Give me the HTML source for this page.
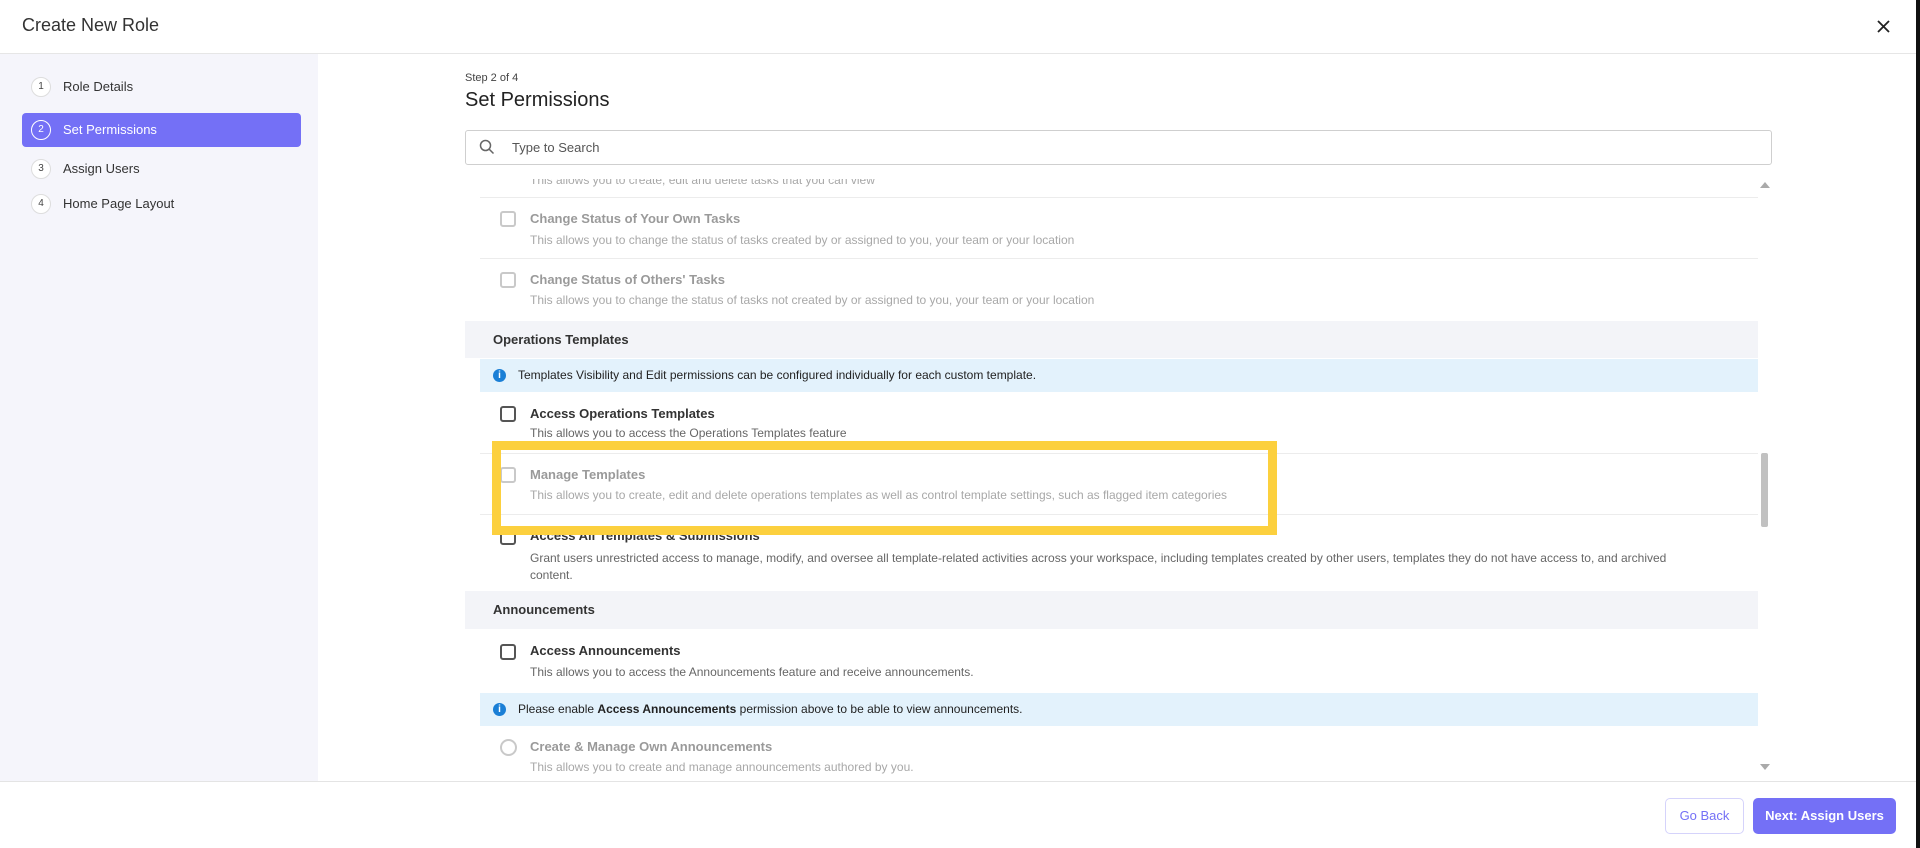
<!DOCTYPE html>
<html><head><meta charset="utf-8"><style>
*{margin:0;padding:0;box-sizing:border-box}
body{width:1920px;height:848px;position:relative;overflow:hidden;background:#fff;font-family:"Liberation Sans",sans-serif;color:#222}
.a{position:absolute;white-space:nowrap}
.t{font-size:13px;font-weight:bold}
.d{font-size:12px}
.dis .t{color:#9a9a9a}.dis .d{color:#a8a8a8}
.en .t{color:#333}.en .d{color:#666}
.cb{position:absolute;width:16px;height:16px;border:2px solid #c9c9c9;border-radius:3px;background:#fff}
.en .cb{border-color:#555}
.sep{position:absolute;left:480px;width:1278px;height:1px;background:#ececec}
.sec{position:absolute;left:465px;width:1293px;background:#f3f4f8;font-size:13px;font-weight:bold;color:#333;padding-left:28px}
.info{position:absolute;left:480px;width:1278px;background:#e3f2fc;font-size:12px;color:#222;padding-left:38px}
.info i{position:absolute;left:13px;width:13px;height:13px;border-radius:50%;background:#1a7fd6;color:#fff;font-size:10px;font-style:normal;text-align:center;line-height:13px;font-weight:bold}
.step{position:absolute;left:22px;width:279px;height:34px;font-size:13px;color:#333}
.step span{position:absolute;left:9px;top:7px;width:20px;height:20px;border-radius:50%;border:1px solid #ddd;background:#fff;font-size:10px;text-align:center;line-height:18px;color:#444}
.step b{position:absolute;left:41px;top:9px;font-weight:normal}
</style></head><body>
<div class="a" style="left:22px;top:15px;font-size:18px;color:#333">Create New Role</div>
<svg class="a" style="left:1877px;top:20px" width="13" height="13" viewBox="0 0 13 13"><path d="M1 1L12 12M12 1L1 12" stroke="#222" stroke-width="1.8"/></svg>
<div class="a" style="left:0;top:53px;width:1916px;height:1px;background:#e6e6e6"></div>
<div class="a" style="left:0;top:54px;width:318px;height:727px;background:#f5f5fb"></div>
<div class="step" style="top:70px"><span>1</span><b>Role Details</b></div>
<div class="step" style="top:113px;background:#7470f6;border-radius:4px;color:#fff"><span style="background:transparent;border:1.5px solid #fff;color:#fff">2</span><b>Set Permissions</b></div>
<div class="step" style="top:152px"><span>3</span><b>Assign Users</b></div>
<div class="step" style="top:187px"><span>4</span><b>Home Page Layout</b></div>

<div class="a" style="left:465px;top:72px;font-size:11px;color:#444">Step 2 of 4</div>
<div class="a" style="left:465px;top:89px;font-size:20px;color:#222">Set Permissions</div>
<div class="a" style="left:465px;top:130px;width:1307px;height:35px;border:1px solid #cfcfcf;border-radius:3px"></div>
<svg class="a" style="left:479px;top:139px" width="16" height="16" viewBox="0 0 16 16"><circle cx="6.5" cy="6.5" r="5" fill="none" stroke="#666" stroke-width="1.5"/><path d="M10.3 10.3L14.5 14.5" stroke="#666" stroke-width="1.5"/></svg>
<div class="a" style="left:512px;top:140px;font-size:13px;color:#555">Type to Search</div>

<div class="a dis" style="left:0;top:0">
<div class="a d" style="left:530px;top:173px;clip-path:inset(6px 0 0 0)">This allows you to create, edit and delete tasks that you can view</div>
</div>
<div class="a" style="left:465px;top:165px;width:1300px;height:6px;background:#fff"></div>
<div class="sep" style="top:197px"></div>
<div class="dis"><div class="cb" style="left:500px;top:211px"></div>
<div class="a t" style="left:530px;top:211px">Change Status of Your Own Tasks</div>
<div class="a d" style="left:530px;top:233px">This allows you to change the status of tasks created by or assigned to you, your team or your location</div></div>
<div class="sep" style="top:258px"></div>
<div class="dis"><div class="cb" style="left:500px;top:272px"></div>
<div class="a t" style="left:530px;top:272px">Change Status of Others' Tasks</div>
<div class="a d" style="left:530px;top:293px">This allows you to change the status of tasks not created by or assigned to you, your team or your location</div></div>
<div class="sec" style="top:321px;height:37px;line-height:37px">Operations Templates</div>
<div class="info" style="top:359px;height:33px;line-height:33px"><i style="top:10px">i</i>Templates Visibility and Edit permissions can be configured individually for each custom template.</div>
<div class="en"><div class="cb" style="left:500px;top:406px"></div>
<div class="a t" style="left:530px;top:406px">Access Operations Templates</div>
<div class="a d" style="left:530px;top:426px">This allows you to access the Operations Templates feature</div></div>
<div class="sep" style="top:453px"></div>
<div class="dis"><div class="cb" style="left:500px;top:467px"></div>
<div class="a t" style="left:530px;top:467px">Manage Templates</div>
<div class="a d" style="left:530px;top:488px">This allows you to create, edit and delete operations templates as well as control template settings, such as flagged item categories</div></div>
<div class="sep" style="top:514px"></div>
<div class="en"><div class="cb" style="left:500px;top:529px"></div>
<div class="a t" style="left:530px;top:528px">Access All Templates &amp; Submissions</div>
<div class="a d" style="left:530px;top:550px;line-height:17px">Grant users unrestricted access to manage, modify, and oversee all template-related activities across your workspace, including templates created by other users, templates they do not have access to, and archived<br>content.</div></div>
<div class="sec" style="top:591px;height:38px;line-height:38px">Announcements</div>
<div class="en"><div class="cb" style="left:500px;top:644px"></div>
<div class="a t" style="left:530px;top:643px">Access Announcements</div>
<div class="a d" style="left:530px;top:665px">This allows you to access the Announcements feature and receive announcements.</div></div>
<div class="info" style="top:693px;height:33px;line-height:33px"><i style="top:10px">i</i>Please enable <b>Access Announcements</b> permission above to be able to view announcements.</div>
<div class="dis"><div class="cb" style="left:500px;top:739px;border-radius:50%;width:17px;height:17px"></div>
<div class="a t" style="left:530px;top:739px">Create &amp; Manage Own Announcements</div>
<div class="a d" style="left:530px;top:760px">This allows you to create and manage announcements authored by you.</div></div>

<div class="a" style="left:1760px;top:182px;width:0;height:0;border-left:5px solid transparent;border-right:5px solid transparent;border-bottom:6px solid #aaa"></div>
<div class="a" style="left:1761px;top:453px;width:7px;height:74px;background:#c1c1c1;border-radius:2px"></div>
<div class="a" style="left:1760px;top:764px;width:0;height:0;border-left:5px solid transparent;border-right:5px solid transparent;border-top:6px solid #aaa"></div>

<div class="a" style="left:492px;top:441px;width:785px;height:94px;border:9px solid #fcd03e"></div>

<div class="a" style="left:0;top:781px;width:1916px;height:1px;background:#e4e4e4"></div>
<div class="a" style="left:1665px;top:798px;width:79px;height:36px;border:1.5px solid #d5d3fb;border-radius:5px;color:#7470f6;font-size:13px;text-align:center;line-height:33px">Go Back</div>
<div class="a" style="left:1753px;top:798px;width:143px;height:36px;background:#7470f6;border-radius:5px;color:#fff;font-size:13px;font-weight:bold;text-align:center;line-height:36px">Next: Assign Users</div>
<div class="a" style="left:1916px;top:0;width:4px;height:848px;background:#111"></div>
</body></html>
